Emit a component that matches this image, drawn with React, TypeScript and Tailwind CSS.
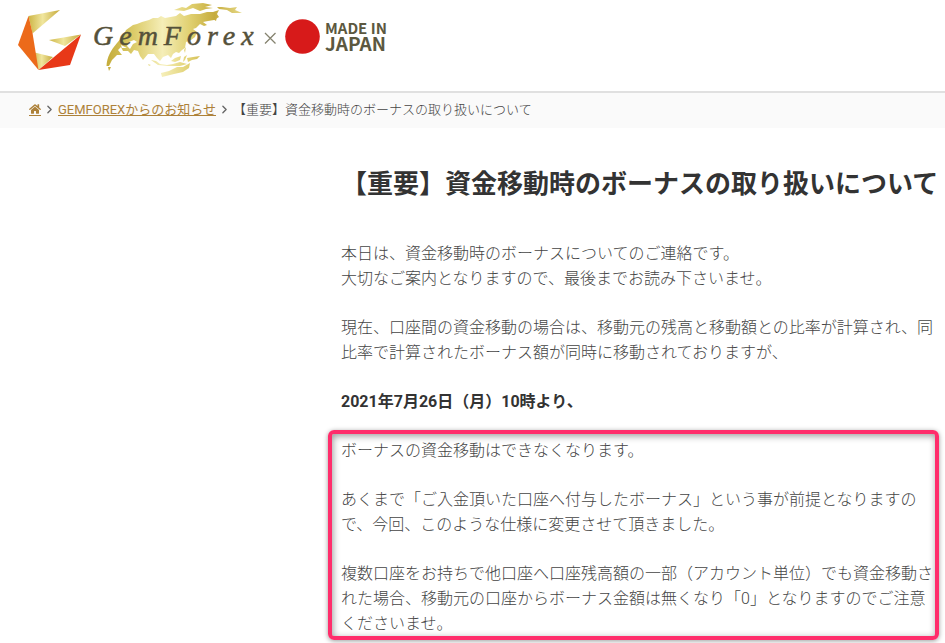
import { ChevronRight } from 'lucide-react';
import { FaHome } from 'react-icons/fa';

const Logo = () => (
  <svg width="400" height="84" viewBox="0 0 400 84" role="img" aria-label="GemForex × MADE IN JAPAN">
    <defs>
      <linearGradient id="gold">
        <stop offset="0" stopColor="#cdb545" />
        <stop offset="0.45" stopColor="#f0e69e" />
        <stop offset="1" stopColor="#c5a93a" />
      </linearGradient>
      <linearGradient id="map" gradientUnits="userSpaceOnUse" x1="105" y1="0" x2="242" y2="0">
        <stop offset="0" stopColor="#c3aa38" />
        <stop offset="0.22" stopColor="#ddcd6c" />
        <stop offset="0.42" stopColor="#f5eeb8" />
        <stop offset="0.62" stopColor="#e0d070" />
        <stop offset="0.8" stopColor="#c6ac3d" />
        <stop offset="1" stopColor="#e6d987" />
      </linearGradient>
    </defs>

    {/* gem */}
    <path fill="url(#gold)" d="M28.5 16 60 10 32.5 33.5Z" />
    <path fill="url(#gold)" d="M49 40 81 34.5 65 46Z" />
    <path fill="url(#gold)" d="M32.5 52 53 57 38.5 70Z" />
    <path fill="#ec6a1a" d="M28.5 16 18 45 38.5 70 32.5 33Z" />
    <path fill="#e83818" d="M81 34.5 70 65 38.5 70Z" />

    {/* world map */}
    <g fill="url(#map)">
      <path d="M106.5 66C107 57 111 50 117 43L123 36 126 30 133 25 137 24 142 22 149 20 153 18 158 18 161 16 165 18 176 16 180 13 184 16 191 14 200 14 207 12 213 12 219 10 217 14 219 17 214 20 208 21 203 22 207 25 204 26 200 24 196 28 193 29 197 32 195 37 191 40 186 42 185 48 182 50 179 53 176 52 173 54 171 58 168 55 163 57 160 61 157 58 154 54 148 54 143 60 140 56 138 51 134 50 131 54 128 51 123 51 121 47 118 50 122 55 117 55 112 60 109 66Z" />
      <path d="M214 14 217 17 216 21 213 19ZM108 67 111 67 109 71Z" />
      <path d="M174 10 182 7 186 8 192 4 203 3 212 5 205 7 213 8 206 9 200 11 193 8 184 11Z" />
      <path d="M217 7 222 7 230 8 237 7 235 10 242 13 232 13 227 10 219 9Z" />
      <path d="M151 60 156 61 160 64 167 65 173 64 180 62 187 64 180 66 168 66 158 65ZM171 61 175 58 181 56 180 60 175 62ZM184 57 187 55 185 60 183 62ZM187 58 193 57 200 56 197 59 192 60 188 62Z" />
      <path d="M184 50 186 47 185 53ZM148 64 151 65 149 66Z" />
      <path d="M162 77 161 73 169 71 177 67 183 67 190 63 189 68 183 72 174 74Z" />
    </g>
    <path fill="#fff" d="M129 42 134 40 137 42 133 44 130 49 127 46ZM121 45 127 48 122 48Z" />

    <text
      x="93"
      y="45"
      fill="#55513a"
      stroke="#55513a"
      strokeWidth="0.5"
      fontSize="28"
      fontStyle="italic"
      letterSpacing="6"
      className="font-['Liberation_Serif',serif]"
    >
      GemForex
    </text>
    <path stroke="#85836f" strokeWidth="1.3" d="M265 33 275.5 43.5M275.5 33 265 43.5" />
    <circle cx="302.5" cy="36.5" r="17.3" fill="#d71a1a" />
    <g fill="#5c5840" className="font-['Noto_Sans_CJK_JP',sans-serif]">
      <text x="325" y="34" fontSize="15" fontWeight="700">MADE IN</text>
      <text x="325" y="51" fontSize="19" fontWeight="700">JAPAN</text>
    </g>
  </svg>
);

const highlighted = [
  'ボーナスの資金移動はできなくなります。',
  'あくまで「ご入金頂いた口座へ付与したボーナス」という事が前提となりますので、今回、このような仕様に変更させて頂きました。',
  '複数口座をお持ちで他口座へ口座残高額の一部（アカウント単位）でも資金移動された場合、移動元の口座からボーナス金額は無くなり「0」となりますのでご注意くださいませ。',
];

const App = () => {
  return (
    <div lang="ja" className="min-h-screen bg-white font-[Roboto,'Noto_Sans_CJK_JP',sans-serif] text-[#444]">
      <header className="border-b-2 border-[#e0e0e0] pb-[7px]">
        <a href="#" className="block w-fit"><Logo /></a>
      </header>

      <nav className="bg-[#fafafa] pt-1.5 pb-2 pl-[29px] text-[13px] leading-[21px]">
        <ol className="flex items-center">
          <li>
            <a href="#" aria-label="ホーム" className="flex border-b border-[#ad8139] text-[#ad8139]">
              <FaHome size={12} />
            </a>
          </li>
          <li className="px-0.5 text-[#666]"><ChevronRight size={13} strokeWidth={2.5} /></li>
          <li><a href="#" className="text-[#ad8139] underline">GEMFOREXからのお知らせ</a></li>
          <li className="px-0.5 text-[#666]"><ChevronRight size={13} strokeWidth={2.5} /></li>
          <li className="font-light">【重要】資金移動時のボーナスの取り扱いについて</li>
        </ol>
      </nav>

      <main className="pt-[38px] pr-1.5 pl-[341px]">
        <h1 className="mb-[39px] whitespace-nowrap text-[26px] leading-9 font-bold text-[#333]">
          【重要】資金移動時のボーナスの取り扱いについて
        </h1>

        <div className="flex flex-col gap-6 text-base leading-[25px] font-light">
          <p>
            本日は、資金移動時のボーナスについてのご連絡です。
            <br />
            大切なご案内となりますので、最後までお読み下さいませ。
          </p>
          <p>現在、口座間の資金移動の場合は、移動元の残高と移動額との比率が計算され、同比率で計算されたボーナス額が同時に移動されておりますが、</p>
          <p className="font-bold text-[#333]">2021年7月26日（月）10時より、</p>

          <section className="relative flex flex-col gap-6">
            {highlighted.map(text => (
              <p key={text}>{text}</p>
            ))}
            <span className="pointer-events-none absolute -top-2 right-0 -bottom-1 -left-[13px] rounded-md border-4 border-[#ff2d6b] shadow-[0_1px_5px_rgba(0,0,0,0.4),inset_1px_2px_7px_rgba(0,0,0,0.4)]" />
          </section>
        </div>
      </main>
    </div>
  );
};

export default App;
